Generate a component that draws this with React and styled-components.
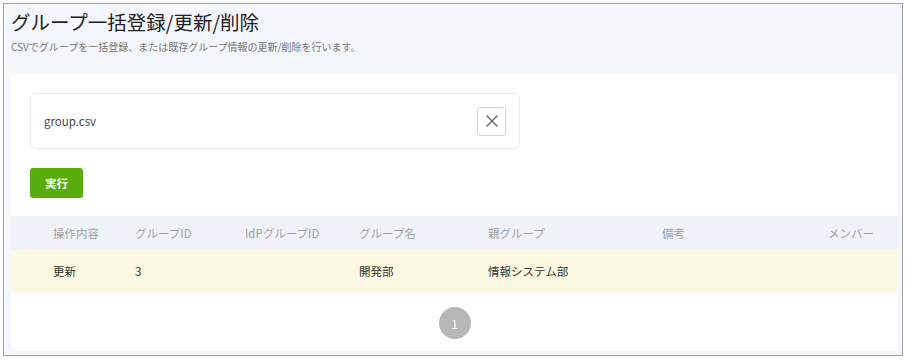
import React, { useState } from 'react';
import styled, { createGlobalStyle } from 'styled-components';

const GlobalStyle = createGlobalStyle`
  body {
    margin: 0;
    font-family: "Noto Sans CJK JP", "Noto Sans", sans-serif;
    background: #ffffff;
  }
`;

const Frame = styled.div`
  margin: 3px 0 0 3px;
  width: 900px;
  height: 353px;
  box-sizing: border-box;
  border: 1px solid #a3a3a3;
  background-color: #f3f6fb;
  padding: 0 4px 4px 7px;
  display: flex;
  flex-direction: column;
`;

const PageHeader = styled.div`
  height: 70px;
  padding-top: 4px;
  box-sizing: border-box;
`;

const Title = styled.h1`
  margin: 0;
  font-size: 19.5px;
  font-weight: 400;
  line-height: 28px;
  color: #222;
`;

const Lead = styled.p`
  margin: 4px 0 0;
  font-size: 10px;
  line-height: 14px;
  color: #777;
`;

const Card = styled.div`
  flex: 1;
  background-color: #ffffff;
  border-radius: 4px;
  display: flex;
  flex-direction: column;
  overflow: hidden;
`;

const Upload = styled.div`
  padding: 19px 19px 18px;
  display: flex;
  flex-direction: column;
  align-items: flex-start;
  gap: 19px;
`;

const FileBox = styled.div`
  width: 490px;
  height: 56px;
  box-sizing: border-box;
  border: 1px solid #e6e8eb;
  border-radius: 6px;
  display: flex;
  align-items: center;
  justify-content: space-between;
  padding: 0 13px 0 13px;
`;

const FileName = styled.span`
  font-size: 11.5px;
  color: #444;
`;

const ClearButton = styled.button`
  width: 29px;
  height: 29px;
  padding: 0;
  border: 1px solid #d4d6d9;
  border-radius: 3px;
  background: #fff;
  display: flex;
  align-items: center;
  justify-content: center;
  color: #666;
  cursor: pointer;
`;

const RunButton = styled.button`
  height: 30px;
  padding: 0 15px;
  border: none;
  border-radius: 3px;
  background-color: #5aad0f;
  color: #fff;
  font-family: inherit;
  font-size: 11.5px;
  font-weight: 700;
  cursor: pointer;
`;

const Row = styled.div`
  display: grid;
  grid-template-columns: 82px 110px 114px 129px 174px 1fr auto;
  align-items: center;
  padding: 0 24px 0 42px;
  height: ${({ head }) => (head ? '34px' : '42px')};
  background-color: ${({ head }) => (head ? '#eff3f9' : '#fbf9e1')};
  color: ${({ head }) => (head ? '#a2a2a2' : '#333')};
  font-size: 11.5px;
`;

const Cell = styled.div`
  white-space: nowrap;
  text-align: ${({ right }) => (right ? 'right' : 'left')};
`;

const Pager = styled.div`
  flex: 1;
  display: flex;
  justify-content: center;
  padding-top: 15px;
`;

const PageDot = styled.span`
  width: 32px;
  height: 32px;
  border-radius: 50%;
  background-color: #b7b7b7;
  color: #fff;
  font-size: 12px;
  display: flex;
  align-items: center;
  justify-content: center;
`;

const columns = ['操作内容', 'グループID', 'IdPグループID', 'グループ名', '親グループ', '備考', 'メンバー'];
const rows = [['更新', '3', '', '開発部', '情報システム部', '', '']];

const App = () => {
  const [file, setFile] = useState('group.csv');

  return (
    <>
      <GlobalStyle />
      <Frame>
        <PageHeader>
          <Title>グループ一括登録/更新/削除</Title>
          <Lead>CSVでグループを一括登録、または既存グループ情報の更新/削除を行います。</Lead>
        </PageHeader>
        <Card>
          <Upload>
            <FileBox>
              <FileName>{file}</FileName>
              <ClearButton onClick={() => setFile('')}>
                <svg width="14" height="14" viewBox="0 0 14 14">
                  <path d="M1.5 1.5 L12.5 12.5 M12.5 1.5 L1.5 12.5" stroke="#666" strokeWidth="1.4" fill="none" />
                </svg>
              </ClearButton>
            </FileBox>
            <RunButton>実行</RunButton>
          </Upload>
          <Row head>
            {columns.map((c, i) => (
              <Cell key={c} right={i === columns.length - 1}>{c}</Cell>
            ))}
          </Row>
          {rows.map((r, i) => (
            <Row key={i}>
              {r.map((v, j) => (
                <Cell key={j}>{v}</Cell>
              ))}
            </Row>
          ))}
          <Pager>
            <PageDot>1</PageDot>
          </Pager>
        </Card>
      </Frame>
    </>
  );
};

export default App;
